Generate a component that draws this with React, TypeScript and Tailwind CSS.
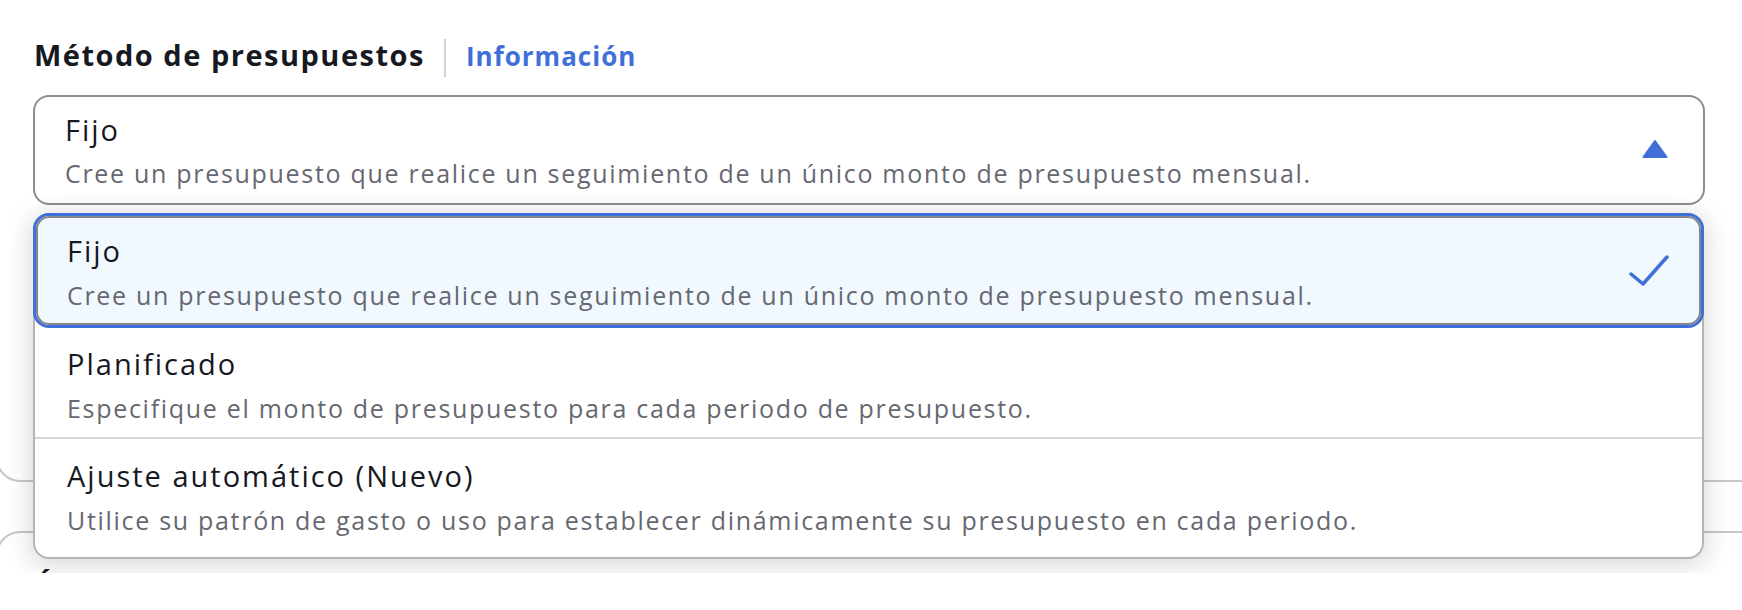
import React from "react";

function Option({
  label,
  desc,
  className,
}: {
  label: string;
  desc: string;
  className: string;
}) {
  return (
    <div className={className}>
      <div className="text-[29px] leading-[36px] tracking-[2px] text-[#16191f] whitespace-nowrap">
        {label}
      </div>
      <div className="mt-[10px] text-[25px] leading-[32px] tracking-[1.7px] text-[#656871] whitespace-nowrap">
        {desc}
      </div>
    </div>
  );
}

export default function App() {
  const fijoDesc =
    "Cree un presupuesto que realice un seguimiento de un único monto de presupuesto mensual.";
  return (
    <div className="w-[1742px] h-[610px] bg-white font-['Open_Sans',sans-serif]">
      <div className="relative h-[573px] overflow-hidden bg-white">
        {/* Title row */}
        <div className="flex items-start pt-[37px] pl-[34px]">
          <div className="text-[29px] leading-[36px] tracking-[1.5px] font-bold text-[#16191f]">
            Método de presupuestos
          </div>
          <div className="ml-[19px] mt-[2px] h-[38px] w-[2px] bg-[#d1d1d6]" />
          <div className="ml-[20px] mt-[1px] text-[26px] leading-[36px] tracking-[1px] font-bold text-[#3f6fd8]">
            Información
          </div>
        </div>

        {/* Trigger */}
        <div className="mx-[33px] mt-[18px] w-[1672px] h-[110px] rounded-[16px] border-2 border-[#8c8c94] bg-white flex items-center justify-between pr-[35px]">
          <div className="pl-[30px] pt-[15px] self-start">
            <div className="text-[29px] leading-[36px] tracking-[2px] text-[#16191f]">
              Fijo
            </div>
            <div className="mt-[9px] text-[25px] leading-[32px] tracking-[1.7px] text-[#656871] whitespace-nowrap">
              {fijoDesc}
            </div>
          </div>
          <svg width="26" height="20" viewBox="0 0 26 20" className="-mt-[2px]">
            <polygon
              points="13,2 24.5,18 1.5,18"
              fill="#3f6fd8"
              stroke="#3f6fd8"
              strokeWidth="2"
              strokeLinejoin="round"
            />
          </svg>
        </div>

        {/* Content behind the dropdown */}
        <div className="ml-[-4px] w-[1790px]">
          <div className="mt-[100px] h-[177px] border-l-2 border-b-2 border-[#c6c6cd] rounded-bl-[24px]" />
          <div className="mt-[49px] h-[120px] border-l-2 border-t-2 border-[#c6c6cd] rounded-tl-[24px] pl-[36px] pt-[34px]">
            <div className="text-[29px] leading-[36px] font-bold text-[#16191f]">
              Ámbito
            </div>
          </div>
        </div>

        {/* Dropdown overlay */}
        <div className="absolute top-[213px] left-[33px] w-[1671px] rounded-[16px] border-2 border-[#b4b4bb] bg-white shadow-[0_4px_24px_4px_rgba(0,7,22,0.14)]">
          <div className="-mx-[2px] -mt-[2px] h-[115px] rounded-[16px] border-[3px] border-[#3f6fd8]">
            <div className="h-full rounded-[13px] border-2 border-[#85858d] bg-[#f1f8fe] flex items-center justify-between pr-[30px]">
              <Option
                label="Fijo"
                desc={fijoDesc}
                className="self-start pl-[29px] pt-[15px]"
              />
              <svg width="40" height="33" viewBox="0 0 40 33">
                <polyline
                  points="2,20 14,30 38,3"
                  fill="none"
                  stroke="#3f6fd8"
                  strokeWidth="3.5"
                  strokeLinecap="round"
                  strokeLinejoin="round"
                />
              </svg>
            </div>
          </div>
          <Option
            label="Planificado"
            desc="Especifique el monto de presupuesto para cada periodo de presupuesto."
            className="h-[111px] pl-[32px] pt-[18px] border-b-2 border-[#d5d5da]"
          />
          <Option
            label="Ajuste automático (Nuevo)"
            desc="Utilice su patrón de gasto o uso para establecer dinámicamente su presupuesto en cada periodo."
            className="h-[118px] pl-[32px] pt-[19px]"
          />
        </div>
      </div>
    </div>
  );
}
